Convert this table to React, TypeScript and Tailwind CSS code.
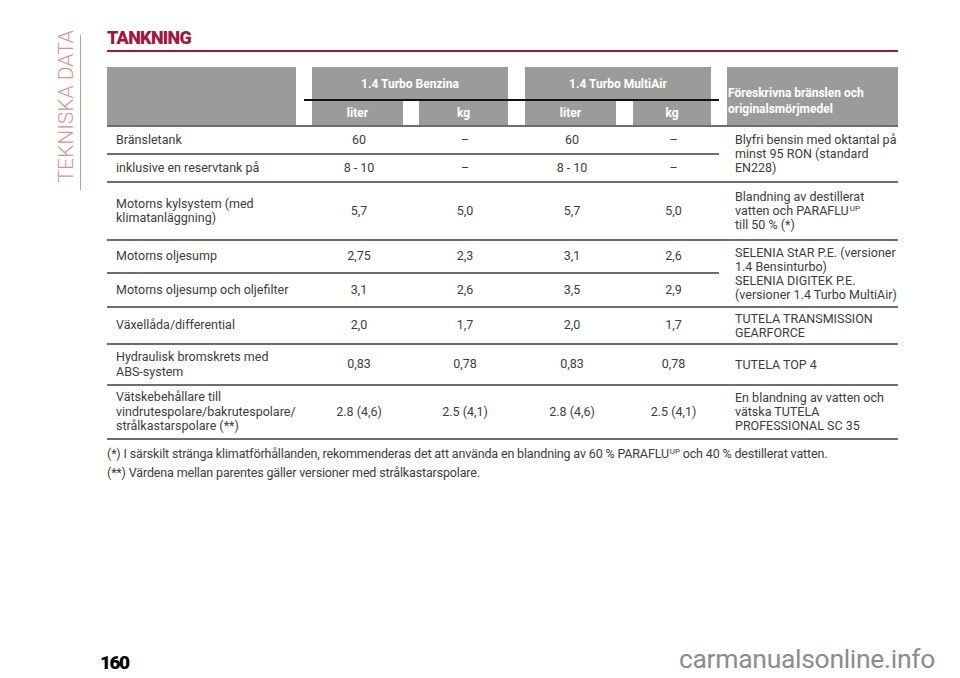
import React from 'react'

const gray = 'bg-[#9b9b9b]'
const line = 'border-b-2 border-[#6e6e6e]'

type Row = {
    label: React.ReactNode
    vals: string[]
    h: string
    short?: boolean
}

const widths = ['w-[107px]', 'w-[106px]', 'w-[108px]', 'w-[94px]']
const inner = ['w-[91px]', 'w-[89px]', 'w-[91px]', 'w-[78px]']

const Cells = ({ label, vals, h, short }: Row) => {
    return (
        <div className={`flex items-center ${h} ${line} ${short ? 'mr-2' : ''}`}>
            <div className="w-[205px] shrink-0 pl-[9px] leading-[14.5px]">{label}</div>
            {vals.map((v, i) => (
                <div key={i} className={`${widths[i]} shrink-0`}>
                    <div className={`${inner[i]} text-center pl-[3px]`}>{v}</div>
                </div>
            ))}
        </div>
    )
}

const Prod = ({ children, span }: { children: React.ReactNode; span?: boolean }) => {
    return (
        <div className={`flex items-center pl-2 leading-[14px] whitespace-nowrap ${line} ${span ? 'row-span-2' : ''}`}>
            <div>{children}</div>
        </div>
    )
}

const Sup = () => <sup className="text-[8px] ml-px">UP</sup>

const App = () => {
    return (
        <div className="w-[960px] h-[678px] bg-white flex flex-col font-['Roboto',sans-serif] text-[#3c3c3c] overflow-hidden">
            <div className="flex flex-1">
                {/* side title */}
                <div className="w-[107px] shrink-0 flex items-start pl-[56px] pt-[30px]">
                    <div className="[writing-mode:vertical-rl] rotate-180 whitespace-nowrap text-[21px] font-light leading-none text-[#d3929c]">TEKNISKA DATA</div>
                    <div className="ml-[3px] mt-[5px] h-[155px] w-px bg-[#d3929c]" />
                </div>

                <div className="w-[791px] shrink-0 pt-[29px]">
                    <div className="text-[18px] font-black leading-none tracking-[-0.7px] text-[#a5173a]">TANKNING</div>
                    <div className="mt-[3px] h-[2px] bg-[#a5173a]" />

                    {/* header */}
                    <div className="mt-[15px] grid grid-cols-[205px_107px_106px_108px_94px_171px] grid-rows-[32px_2px_24px] text-white font-bold text-[12px]">
                        <div className="row-span-3 pr-4"><div className={`h-full ${gray}`} /></div>
                        <div className="col-span-2 pr-[17px]">
                            <div className={`h-full ${gray} flex items-center justify-center pt-px`}>1.4 Turbo Benzina</div>
                        </div>
                        <div className="col-span-2 pr-4">
                            <div className={`h-full ${gray} flex items-center justify-center pt-px`}>1.4 Turbo MultiAir</div>
                        </div>
                        <div className={`row-span-3 ${gray} flex items-center pl-px pt-[10px] leading-4`}>
                            <div>Föreskrivna bränslen och<br />originalsmörjmedel</div>
                        </div>
                        <div className="col-span-4 ml-[-8px] mr-2 bg-[#111]" />
                        <div className="pr-4"><div className={`h-full ${gray} flex items-center justify-center`}>liter</div></div>
                        <div className="pr-[17px]"><div className={`h-full ${gray} flex items-center justify-center`}>kg</div></div>
                        <div className="pr-[17px]"><div className={`h-full ${gray} flex items-center justify-center`}>liter</div></div>
                        <div className="pr-4"><div className={`h-full ${gray} flex items-center justify-center`}>kg</div></div>
                    </div>
                    <div className="h-[2px] bg-[#6e6e6e]" />

                    {/* body */}
                    <div className="grid grid-cols-[620px_171px] text-[12.5px]">
                        <Cells short h="h-[28px]" label="Bränsletank" vals={['60', '–', '60', '–']} />
                        <Prod span>Blyfri bensin med oktantal på<br />minst 95 RON (standard<br />EN228)</Prod>
                        <Cells h="h-[28px]" label="inklusive en reservtank på" vals={['8 - 10', '–', '8 - 10', '–']} />

                        <Cells h="h-[58px]" label={<>Motorns kylsystem (med<br />klimatanläggning)</>} vals={['5,7', '5,0', '5,7', '5,0']} />
                        <Prod>Blandning av destillerat<br />vatten och PARAFLU<Sup /><br />till 50 % (*)</Prod>

                        <Cells short h="h-[33px]" label="Motorns oljesump" vals={['2,75', '2,3', '3,1', '2,6']} />
                        <Prod span>SELENIA StAR P.E. (versioner<br />1.4 Bensinturbo)<br />SELENIA DIGITEK P.E.<br />(versioner 1.4 Turbo MultiAir)</Prod>
                        <Cells h="h-[34px]" label="Motorns oljesump och oljefilter" vals={['3,1', '2,6', '3,5', '2,9']} />

                        <Cells h="h-[37px]" label="Växellåda/differential" vals={['2,0', '1,7', '2,0', '1,7']} />
                        <Prod>TUTELA TRANSMISSION<br />GEARFORCE</Prod>

                        <Cells h="h-[41px]" label={<>Hydraulisk bromskrets med<br />ABS-system</>} vals={['0,83', '0,78', '0,83', '0,78']} />
                        <Prod>TUTELA TOP 4</Prod>

                        <Cells h="h-[54px]" label={<>Vätskebehållare till<br />vindrutespolare/bakrutespolare/<br />strålkastarspolare (**)</>} vals={['2.8 (4,6)', '2.5 (4,1)', '2.8 (4,6)', '2.5 (4,1)']} />
                        <Prod>En blandning av vatten och<br />vätska TUTELA<br />PROFESSIONAL SC 35</Prod>
                    </div>

                    <div className="mt-[4px] text-[12.5px] tracking-[-0.15px] leading-[19px] whitespace-nowrap">
                        <div>(*) I särskilt stränga klimatförhållanden, rekommenderas det att använda en blandning av 60 % PARAFLU<Sup /> och 40 % destillerat vatten.</div>
                        <div>(**) Värdena mellan parentes gäller versioner med strålkastarspolare.</div>
                    </div>
                </div>
            </div>

            <div className="flex items-end justify-between pl-[100px] pr-[25px] pb-[6px]">
                <div className="text-[19px] font-black leading-none tracking-[-1.5px] text-black">160</div>
                <div className="text-[26.5px] leading-none tracking-[-0.3px] text-[#8c8c8c]">carmanualsonline.info</div>
            </div>
        </div>
    )
}

export default App
